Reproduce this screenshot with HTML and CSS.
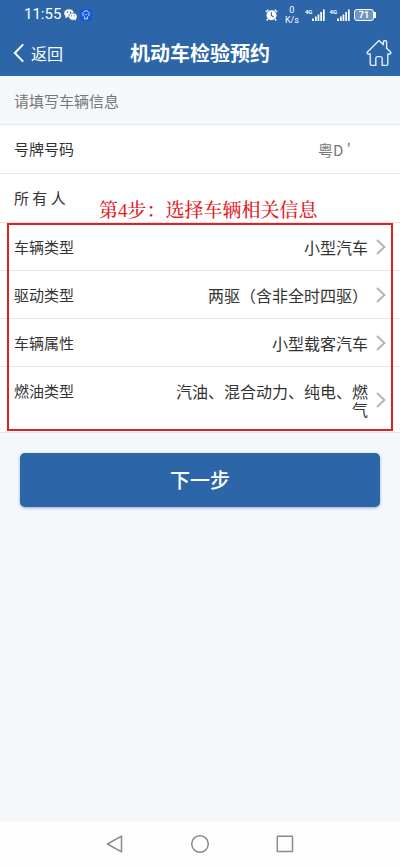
FILE: index.html
```html
<!DOCTYPE html>
<html lang="zh-CN">
<head>
    <meta charset="UTF-8">
    <meta name="viewport" content="width=device-width, initial-scale=1.0">
    <title>机动车检验预约</title>
    <link rel="stylesheet" href="styles.css">
</head>
<body>

    <header class="header">
        <div class="status-bar">
            <div class="status-left">
                <span class="time">11:55</span>
                <svg class="wechat-icon" width="13" height="12" viewBox="0 0 13 12">
                    <ellipse cx="5" cy="4.2" rx="4.8" ry="4" fill="#fff"/>
                    <path d="M1.6 6.5 L1.2 9.2 L4.5 7.6 Z" fill="#fff"/>
                    <ellipse cx="9" cy="7.6" rx="4.2" ry="3.6" fill="#fff" stroke="#2c66a8" stroke-width=".7"/>
                    <path d="M10 10.6 L11.7 11.8 L11.5 9.8 Z" fill="#fff"/>
                    <circle cx="3.4" cy="3.3" r=".7" fill="#2c66a8"/>
                    <circle cx="6.4" cy="3.3" r=".7" fill="#2c66a8"/>
                    <circle cx="7.6" cy="6.8" r=".6" fill="#2c66a8"/>
                    <circle cx="10.4" cy="6.8" r=".6" fill="#2c66a8"/>
                </svg>
                <svg width="12" height="12" viewBox="0 0 12 12">
                    <rect width="12" height="12" rx="2" fill="#1559d6"/>
                    <path d="M4.6 7.8 C1.4 6 2.7 1.8 6 1.8 C9.3 1.8 10.6 6 7.4 7.8 V10 H4.6 Z" fill="none" stroke="#c9dcfb" stroke-width="1"/>
                    <path d="M4.6 5 L6 6 L7.4 5" fill="none" stroke="#c9dcfb" stroke-width=".7"/>
                </svg>
            </div>
            <div class="status-right">
                <svg width="13" height="12" viewBox="0 0 13 12">
                    <path d="M.8 3 L3.4 .8 M12.2 3 L9.6 .8 M3 10 L1.7 11.5 M10 10 L11.3 11.5" stroke="#fff" stroke-width="1.4"/>
                    <circle cx="6.5" cy="6.2" r="5" fill="#fff"/>
                    <path d="M6.4 3.2 V6.5 L8.6 8" fill="none" stroke="#2c66a8" stroke-width="1.1"/>
                </svg>
                <span class="speed">0<br>K/s</span>
                <span class="signal">
                    <span class="net">4G</span>
                    <svg width="13" height="12" viewBox="0 0 13 12" fill="#fff">
                        <path d="M0 9.5h2v2.5h-2z M3 7.5h1.7v4.5h-1.7z M5.6 5.5h1.7v6.5h-1.7z M8.3 3h1.7v9h-1.7z M11 .5h1.7v11.5h-1.7z"/>
                    </svg>
                </span>
                <span class="signal">
                    <span class="net">4G</span>
                    <svg width="13" height="12" viewBox="0 0 13 12" fill="#fff">
                        <path d="M0 9.5h2v2.5h-2z M3 7.5h1.7v4.5h-1.7z M5.6 5.5h1.7v6.5h-1.7z M8.3 3h1.7v9h-1.7z M11 .5h1.7v11.5h-1.7z"/>
                    </svg>
                </span>
                <span class="battery"><span class="battery-level">71</span></span>
            </div>
        </div>
        <nav class="title-bar">
            <a class="back" href="#">
                <svg width="12" height="20" viewBox="0 0 12 20">
                    <path d="M10.2 1.4 L1.8 10 L10.2 18.6" fill="none" stroke="#fff" stroke-width="2"/>
                </svg>
                返回
            </a>
            <h1>机动车检验预约</h1>
            <a class="home" href="#" aria-label="首页">
                <svg width="26" height="28" viewBox="0 0 26 28">
                    <path d="M13 1.6 L1.2 13.2 Q.8 15 2.6 15 H4.2 V25 Q4.2 26.4 5.6 26.4 H9.8 V19.4 Q9.8 17.6 11.4 17.6 H14.6 Q16.2 17.6 16.2 19.4 V26.4 H20.4 Q21.8 26.4 21.8 25 V15 H23.4 Q25.2 15 24.8 13.2 L20.6 9.2 V2.8 Q20.6 1.8 19.6 1.8 H18.4 Q17.4 1.8 17.4 2.8 V5.8 Z" fill="none" stroke="#e4effa" stroke-width="1.4" stroke-linejoin="round"/>
                </svg>
            </a>
        </nav>
    </header>

    <main class="content">
        <p class="intro">请填写车辆信息</p>

        <form class="form">
            <div class="row">
                <label class="label" for="plate">号牌号码</label>
                <input class="plate" id="plate" type="text" value="粤D '" readonly>
            </div>
            <div class="row">
                <label class="label" for="owner">所 有 人</label>
                <input class="owner" id="owner" type="text" readonly>
            </div>

            <!-- Step highlight -->
            <div class="step">
                <div class="step-note">第4步：选择车辆相关信息</div>
                <button class="row" type="button">
                    <span class="label">车辆类型</span>
                    <span class="value">小型汽车</span>
                    <svg class="arrow" width="10" height="16" viewBox="0 0 10 16"><path d="M1 1 L8.4 8 L1 15"/></svg>
                </button>
                <button class="row" type="button">
                    <span class="label">驱动类型</span>
                    <span class="value">两驱（含非全时四驱）</span>
                    <svg class="arrow" width="10" height="16" viewBox="0 0 10 16"><path d="M1 1 L8.4 8 L1 15"/></svg>
                </button>
                <button class="row" type="button">
                    <span class="label">车辆属性</span>
                    <span class="value">小型载客汽车</span>
                    <svg class="arrow" width="10" height="16" viewBox="0 0 10 16"><path d="M1 1 L8.4 8 L1 15"/></svg>
                </button>
                <button class="row" type="button">
                    <span class="label">燃油类型</span>
                    <span class="value">汽油、混合动力、纯电、燃气</span>
                    <svg class="arrow" width="10" height="16" viewBox="0 0 10 16"><path d="M1 1 L8.4 8 L1 15"/></svg>
                </button>
            </div>

            <button class="next" type="submit">下一步</button>
        </form>
    </main>

    <!-- Android navigation -->
    <footer class="system-nav">
        <button type="button" aria-label="返回">
            <svg width="20" height="20" viewBox="0 0 20 20"><path d="M16.5 2.2 V17.8 L2.5 10 Z"/></svg>
        </button>
        <button type="button" aria-label="主屏幕">
            <svg width="20" height="20" viewBox="0 0 20 20"><circle cx="10" cy="10" r="8.3"/></svg>
        </button>
        <button type="button" aria-label="最近任务">
            <svg width="20" height="20" viewBox="0 0 20 20"><rect x="2.3" y="2.3" width="15.2" height="15.2" rx=".6"/></svg>
        </button>
    </footer>

</body>
</html>
```
FILE: styles.css
```css
* {
    box-sizing: border-box;
}
body {
    margin: 0;
    min-height: 100vh;
    display: flex;
    flex-direction: column;
    font-family: "Noto Sans CJK SC", sans-serif;
    font-size: 15px;
    color: #333;
    background-color: #f4f8fa;
}
button, input {
    font-family: inherit;
    color: inherit;
    border: 0;
    background: none;
    padding: 0;
}
a {
    color: #fff;
    text-decoration: none;
}

/* Header */
.header {
    background-color: #2c66a8;
    color: #fff;
}
.status-bar {
    display: flex;
    justify-content: space-between;
    align-items: center;
    height: 29px;
    padding: 0 24px;
    font-family: Roboto, sans-serif;
}
.status-left, .status-right {
    display: flex;
    align-items: center;
    gap: 3px;
}
.status-right {
    gap: 4px;
}
.time {
    font-size: 15px;
    line-height: 29px;
}
.speed {
    font-size: 9px;
    line-height: 10px;
    text-align: center;
    margin: 0 2px 0 3px;
}
.signal {
    display: flex;
    align-items: flex-start;
}
.net {
    font-size: 6px;
    line-height: 6px;
    font-weight: bold;
}
.battery {
    display: flex;
    align-items: center;
}
.battery::after {
    content: "";
    width: 2px;
    height: 6px;
    background-color: #fff;
}
.battery-level {
    width: 20px;
    border: 1px solid #fff;
    border-radius: 3px;
    background-color: #6d96c4;
    font-size: 9px;
    line-height: 10px;
    font-weight: bold;
    text-align: center;
}
.title-bar {
    display: grid;
    grid-template-columns: 1fr auto 1fr;
    align-items: center;
    height: 47px;
    padding: 0 8px;
}
.back {
    display: flex;
    align-items: center;
    gap: 6px;
    padding-left: 5px;
    font-size: 16px;
}
.title-bar h1 {
    margin: 0;
    font-size: 20px;
    line-height: 47px;
    font-weight: bold;
}
.home {
    display: flex;
    justify-self: end;
}

/* Vehicle form */
.content {
    flex: 1;
}
.intro {
    margin: 0;
    padding: 1px 14px 0;
    line-height: 47px;
    border-bottom: 1px solid #e2e6e8;
    color: #777;
}
.row {
    display: flex;
    align-items: center;
    width: 100%;
    padding: 15px 14px;
    border-bottom: 1px solid #e4e6e8;
    background-color: #fff;
    line-height: 18px;
    text-align: left;
}
.label {
    flex: 1;
    align-self: flex-start;
    font-size: 15px;
}
.value {
    max-width: 200px;
    font-size: 16px;
    text-align: right;
}
.arrow {
    margin-left: 8px;
    fill: none;
    stroke: #b4b4b4;
    stroke-width: 2;
}
.plate, .owner {
    width: 50px;
    height: 18px;
    margin-right: 18px;
    font-size: 15px;
    color: #777;
}
.step {
    position: relative;
}
.step .row {
    padding-bottom: 14px;
}
.step::after {
    content: "";
    position: absolute;
    inset: 0 7px 2px;
    border: 2px solid #e3201f;
    pointer-events: none;
}
.step-note {
    position: absolute;
    left: 99px;
    bottom: 100%;
    font-family: "Liberation Serif", "Noto Serif CJK SC", "Noto Sans CJK SC", serif;
    font-size: 19px;
    font-weight: 500;
    line-height: 25px;
    color: #e3201f;
    white-space: nowrap;
}
.next {
    display: block;
    width: calc(100% - 40px);
    margin: 20px;
    border-radius: 5px;
    background-color: #2c66a8;
    box-shadow: 0 1px 3px rgba(44, 102, 168, 0.5);
    color: #fff;
    font-size: 20px;
    line-height: 54px;
    font-weight: 500;
}

/* System navigation */
.system-nav {
    display: flex;
    justify-content: center;
    gap: 65px;
    padding: 12px 0;
    background-color: #fdfdfd;
}
.system-nav button {
    display: flex;
}
.system-nav svg {
    fill: none;
    stroke: #8a8a8a;
    stroke-width: 1.5;
    stroke-linejoin: round;
}
```
